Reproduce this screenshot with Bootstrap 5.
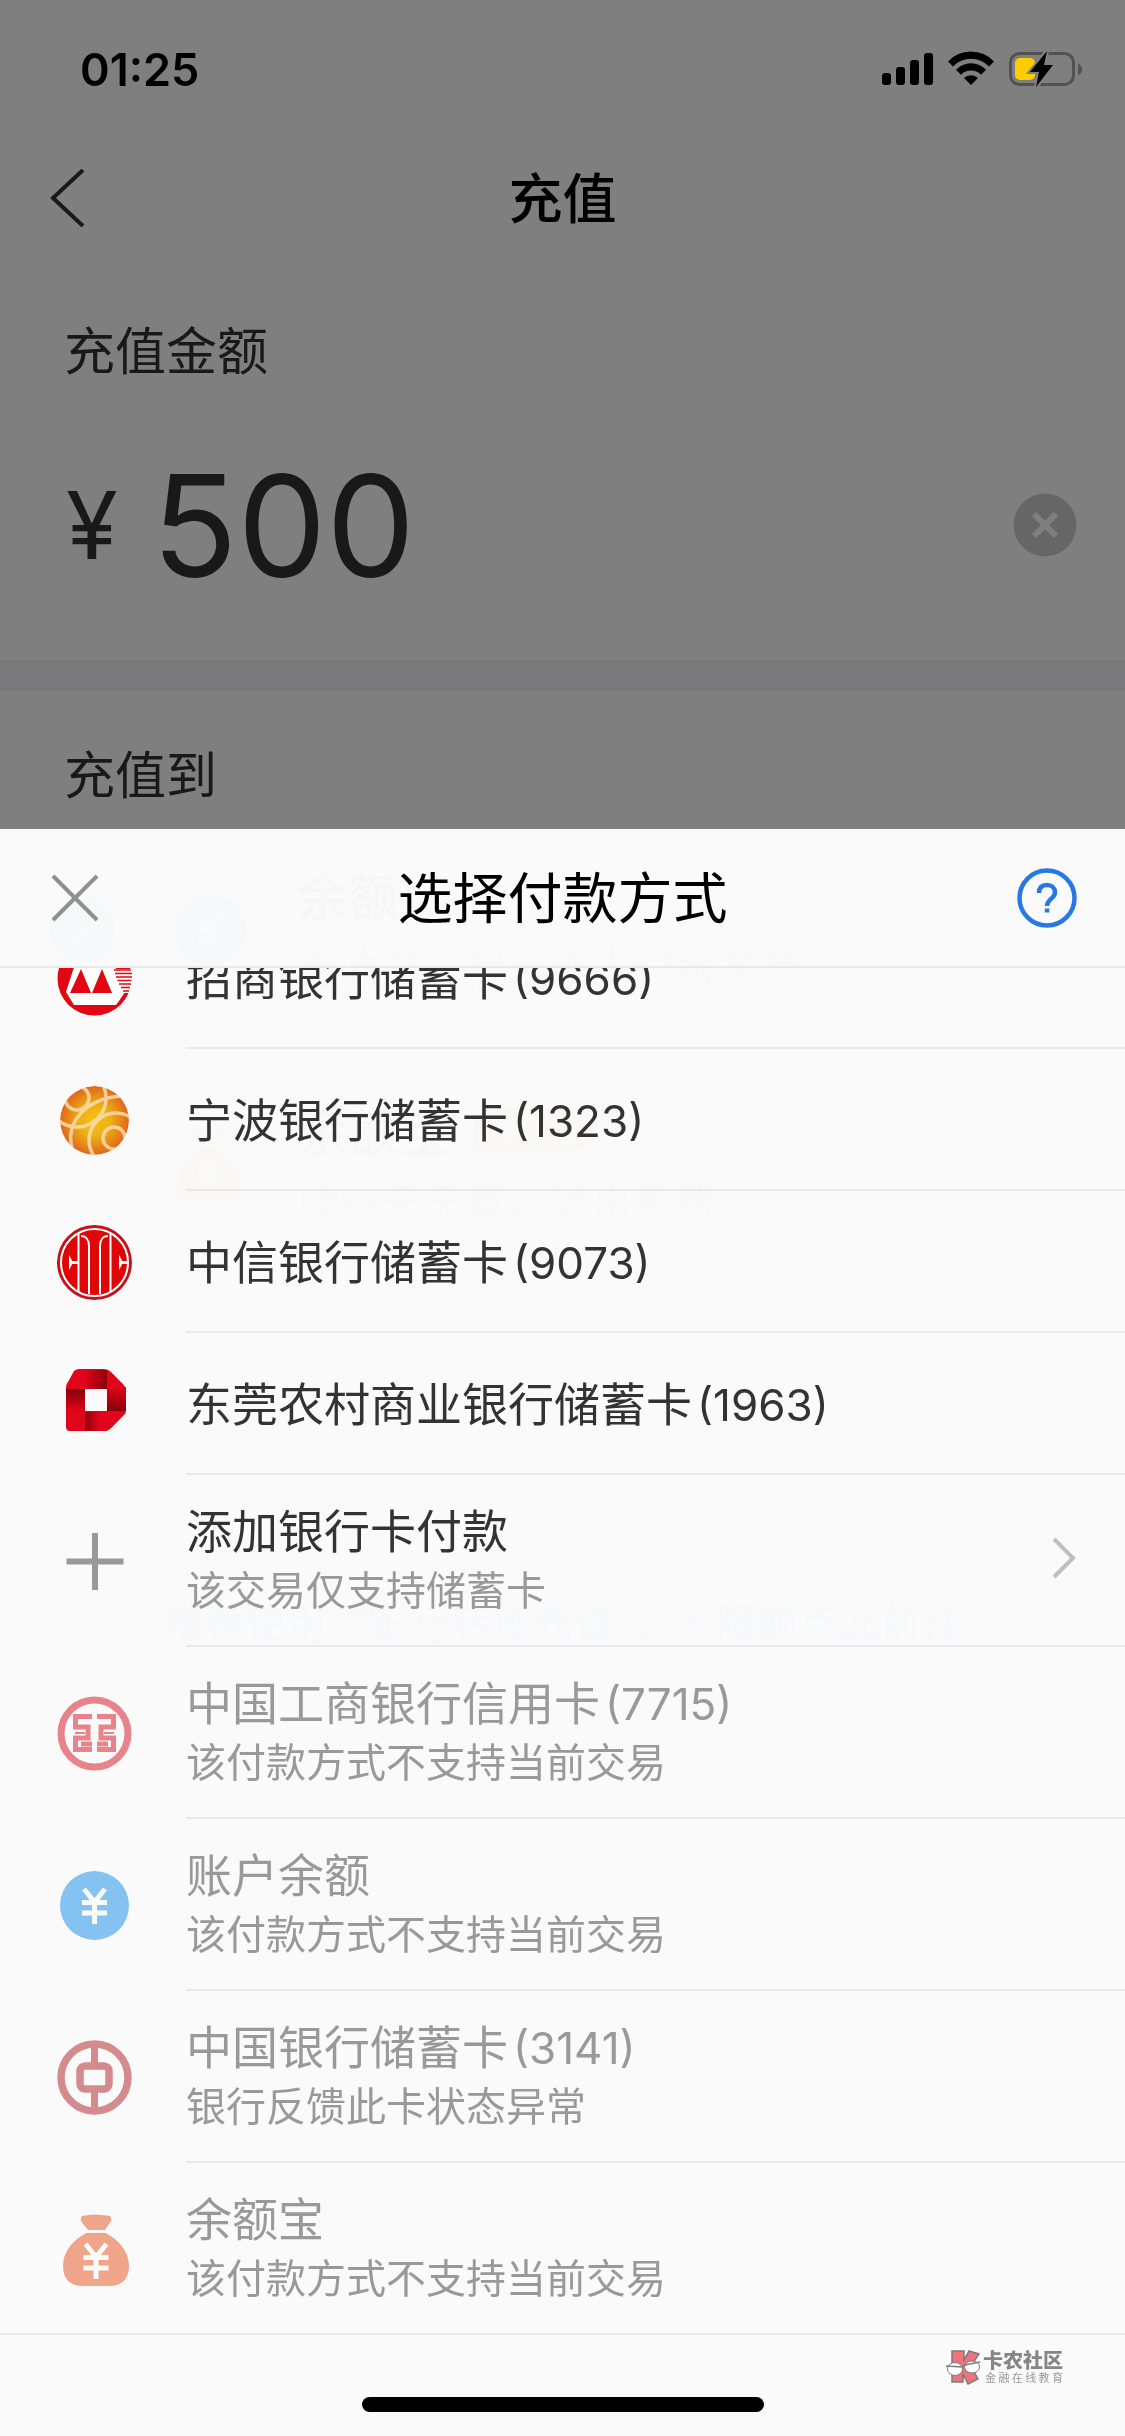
<!DOCTYPE html>
<html lang="zh-CN">
<head>
<meta charset="utf-8">
<meta name="viewport" content="width=device-width, initial-scale=1">
<title>充值</title>
<link href="https://cdn.jsdelivr.net/npm/bootstrap@5.3.0/dist/css/bootstrap.min.css" rel="stylesheet">
<style>
  :root { --latin: Inter, "Noto Sans CJK SC", sans-serif; --han: "Noto Sans CJK SC", sans-serif; }
  body { font-family: var(--han); color: #333; background: #fff; overflow: hidden; }
  svg { display: block; flex: none; }
  .plain { background: none; border: 0; padding: 0; color: inherit; }

  /* recharge page */
  .statusbar { height: 138px; padding: 0 42px 0 80px; font: 600 45px/1 var(--latin); color: #000; z-index: 1051; }
  .topbar { height: 120px; padding: 0 50px; }
  .topbar h1 { font-size: 54px; font-weight: 500; line-height: 80px; color: #000; margin: 0; padding-bottom: 4px; }
  .topbar .side { width: 60px; }
  .section-label { font-size: 51px; line-height: 80px; padding: 0 64px; margin: 0; font-weight: 400; }
  .section-label.first { margin-top: 50px; }
  .section-label.second { margin-top: 42px; }
  .amount-row { height: 206px; padding: 0 48px 0 66px; gap: 34px; margin: 34px 0 32px; }
  .amount-row label { font: 400 94px/1 var(--latin); }
  .amount-row input { font: 400 141px/1 var(--latin); color: inherit; min-width: 0; }
  .amount-row input:focus { outline: none; }
  .band { height: 30px; background: #f4f4f8; border-top: 3px solid #f0f0f2; border-bottom: 3px solid #f0f0f2; }
  .target { height: 235px; padding: 0 49px; }
  .target .t-name { font-size: 51px; line-height: 72px; }
  .target .t-note { font-size: 42px; line-height: 72px; color: #999; }
  .t-tag { font-size: 30px; line-height: 42px; background: #ff3b30; border-radius: 21px 21px 21px 0; padding: 0 16px; margin-left: 24px; color: #fff; }
  .next-btn { height: 138px; margin: 88px 50px 0; background: #d2d6dd; color: #fff; font-size: 54px; border-radius: 12px; }
  .tip { font-size: 41px; line-height: 60px; margin-top: 82px; color: #1677ff; text-decoration: none; }
  .dim { background: rgba(0,0,0,.5); }

  /* payment sheet */
  .sheet { top: 829px; background: rgba(254,254,254,.97); z-index: 1050; }
  .sheet-head { flex: none; height: 139px; padding: 0 48px; border-bottom: 2px solid #e9e9eb; }
  .sheet-head h2 { font-size: 55px; line-height: 80px; font-weight: 400; color: #000; margin: 0; padding-bottom: 8px; }
  .paylist { min-height: 0; }
  .pay { flex: none; height: 142px; padding-left: 57px; color: #333; text-decoration: none; }
  .pay.two { height: 172px; }
  .pay svg.logo { width: 75px; height: 75px; }
  .pay .body-cell { margin-left: 54px; border-bottom: 2px solid #e9e9eb; padding: 0 48px 4px 0; }
  .pay:last-child { border-bottom: 2px solid #e9e9eb; }
  .pay:last-child .body-cell { border-bottom: 0; }
  .pay .p-name { font-size: 46px; line-height: 60px; }
  .pay .p-name span { font: 400 44px/1 var(--latin); margin-left: 5px; }
  .pay .p-note { font-size: 40px; line-height: 60px; color: #999; }
  .pay.off { color: #999; }
  .pay.off svg { opacity: .5; }
  .sheet-foot { flex: none; height: 101px; }
  .sheet-foot .homebar { height: 15px; width: 402px; border-radius: 8px; background: #000; margin-bottom: 24px; }
  .brand { right: 62px; bottom: 51px; color: #868686; gap: 2px; }
  .brand .b-name { font-size: 20px; line-height: 20px; font-weight: 900; }
  .brand .b-sub { font-size: 11px; line-height: 14px; text-align-last: justify; padding-left: 2px; color: #999; }
</style>
<script src="https://cdn.jsdelivr.net/npm/bootstrap@5.3.0/dist/js/bootstrap.bundle.min.js"></script>
</head>
<body>
<main class="d-flex flex-column min-vh-100">
  <div class="statusbar position-relative d-flex align-items-center justify-content-between">
    <span>01:25</span>
    <svg width="202" height="36" viewBox="0 0 202 36" role="img" aria-label="信号、无线网络、电量">
      <rect x="1" y="22" width="9" height="12" rx="3"/><rect x="15" y="16" width="9" height="18" rx="3"/>
      <rect x="29" y="9" width="9" height="25" rx="3"/><rect x="43" y="2" width="9" height="32" rx="3"/>
      <path d="M67 10.500a31.500 31.500 0 0 1 46 0l-5 5a25 25 0 0 0-36 0z"/>
      <path d="M75 18.800a20.500 20.500 0 0 1 30 0l-5 5a14 14 0 0 0-20 0z"/>
      <path d="M83 27a10 10 0 0 1 14 0l-7 7z"/>
      <rect x="129.500" y="2.500" width="63" height="31" rx="9" fill="none" stroke="#525252" stroke-width="3"/>
      <path d="M197 12.500v12q4-2 4-6t-4-6z" fill="#525252"/>
      <rect x="134" y="7" width="20" height="22" rx="5" fill="#fc0"/>
      <path d="M166 0l-3 14h9l-17 22 3-15h-9z" fill="#000" stroke="#808080" stroke-width="4" paint-order="stroke"/>
    </svg>
  </div>
  <header class="topbar d-flex align-items-center justify-content-between">
    <button class="plain side" aria-label="返回"><svg width="36" height="58" viewBox="0 0 36 58" fill="none" stroke="#333" stroke-width="4"><path d="M33 1L3 29l30 28"/></svg></button>
    <h1>充值</h1><span class="side"></span>
  </header>
  <h2 class="section-label first">充值金额</h2>
  <div class="amount-row d-flex align-items-center">
    <label for="amt">¥</label>
    <input id="amt" class="plain flex-grow-1" value="500" inputmode="decimal">
    <button class="plain" aria-label="清除"><svg width="64" height="64" viewBox="0 0 64 64"><circle cx="32" cy="32" r="31.500" fill="#ccc"/><path d="M21 21l22 22M43 21L21 43" stroke="#fff" stroke-width="6"/></svg></button>
  </div>
  <div class="band"></div>
  <h2 class="section-label second">充值到</h2>
  <div class="target d-flex align-items-center">
    <svg width="67" height="67" viewBox="0 0 67 67"><circle cx="33.500" cy="33.500" r="33" fill="#1677ff"/><path d="M19 34l11 11 19-22" fill="none" stroke="#fff" stroke-width="5"/></svg>
    <svg class="ms-5 me-5" width="85" height="74" viewBox="0 0 85 74"><circle cx="46" cy="37" r="36" fill="#108ee9"/><path d="M34 19l12 16 12-16M34 37h24M34 47h24M46 35v22" fill="none" stroke="#fff" stroke-width="5"/></svg>
    <div><div class="t-name">余额</div><div class="t-note">无收益，提现需支付服务费</div></div>
  </div>
  <div class="target d-flex align-items-center">
    <svg width="67" height="67" viewBox="0 0 67 67"><circle cx="33.500" cy="33.500" r="32" fill="none" stroke="#ccc" stroke-width="2"/></svg>
    <svg class="ms-5 me-5" width="85" height="74" viewBox="0 0 85 74"><path d="M31 3q12-4 26 0 3 6-5 13H36q-8-7-5-13zM36 20h17c14 10 24 26 24 38 0 11-8 15-19 15H31c-11 0-19-4-19-15 0-12 10-28 24-38z" fill="#f4511e"/><path d="M34 29l11 14 11-14M34 45h22M34 55h22M45 43v22" fill="none" stroke="#fff" stroke-width="5"/></svg>
    <div><div class="t-name d-flex align-items-center">余额宝<span class="t-tag">赚收益</span></div><div class="t-note">收益天天算，转出免费</div></div>
  </div>
  <button class="next-btn plain">下一步</button>
  <a class="tip text-center" href="#">推荐使用“银行转账充值”，不限额点此前往</a>
</main>
<div class="dim position-fixed top-0 start-0 w-100 h-100"></div>

<section class="sheet position-fixed start-0 end-0 bottom-0 d-flex flex-column" role="dialog" aria-labelledby="sheetTitle">
  <div class="sheet-head d-flex align-items-center justify-content-between">
    <button class="plain" aria-label="关闭"><svg width="60" height="54" viewBox="0 0 60 54" stroke="#909092" stroke-width="4"><path d="M5 5l44 44M49 5L5 49"/></svg></button>
    <h2 id="sheetTitle">选择付款方式</h2>
    <button class="plain" aria-label="帮助"><svg width="60" height="60" viewBox="0 0 60 60" fill="none" stroke="#2878e4" stroke-width="4.500"><circle cx="30" cy="30" r="27.500"/><path d="M22 25c0-5.500 3-8 8-8s8 3 8 7.500c0 6-8 6.500-8 13.500"/><path d="M27.800 40.500h4.500v4h-4.500z" fill="#2878e4" stroke="none"/></svg></button>
  </div>

  <div class="paylist flex-grow-1 overflow-hidden d-flex flex-column justify-content-end">
    <a href="#" class="pay d-flex align-items-center">
      <svg class="logo" viewBox="0 0 75 75"><circle cx="37.500" cy="37.500" r="37" fill="#e20613"/><path d="M19 20h37l12 31-6 9-3 4H17L9 51z" fill="#fff"/><path d="M24 28L13 52h21zM45 28L35 52h20z" fill="#e20613"/><path d="M58 28h17v24h-9z" fill="#fff"/><path d="M57 29h17M58 32.500h17M59 36h16M60.500 39.500h14M62 43h12M64 46.500h9M66 50h6" stroke="#e20613" stroke-width="1.600"/></svg>
      <div class="body-cell flex-grow-1 h-100 d-flex flex-column justify-content-center"><div class="p-name">招商银行储蓄卡<span>(9666)</span></div></div>
    </a>
    <a href="#" class="pay d-flex align-items-center">
      <svg class="logo" viewBox="0 0 75 75"><defs><radialGradient id="nb"><stop offset="0" stop-color="#f3c313"/><stop offset=".45" stop-color="#eeb015"/><stop offset="1" stop-color="#e0681c"/></radialGradient><clipPath id="nbc"><circle cx="37.500" cy="37.500" r="34.500"/></clipPath></defs><g clip-path="url(#nbc)"><circle cx="37.500" cy="37.500" r="34.500" fill="url(#nb)"/><g fill="none" stroke="#fbdcae" stroke-width="3.500" opacity=".85"><circle cx="20" cy="15" r="12"/><circle cx="20" cy="15" r="29"/><circle cx="57" cy="55" r="11"/><circle cx="59" cy="57" r="27"/><path d="M16 68C6 42 28 12 72 13"/></g></g></svg>
      <div class="body-cell flex-grow-1 h-100 d-flex flex-column justify-content-center"><div class="p-name">宁波银行储蓄卡<span>(1323)</span></div></div>
    </a>
    <a href="#" class="pay d-flex align-items-center">
      <svg class="logo" viewBox="0 0 75 75"><circle cx="37.500" cy="37.500" r="37.500" fill="#c41218"/><circle cx="37.500" cy="37.500" r="33.500" fill="#e10606" stroke="#fff" stroke-width="2"/><path d="M21.500 9v57M53.500 9v57M24 11c5 0 8 4 8 10v48M51 11c-5 0-8 4-8 10v48" fill="none" stroke="#fff" stroke-width="2"/><path d="M12 30q3 5 3 6h6v3h-6q0 1-3 6zM62 30q3 5 3 6h6v3h-6q0 1-3 6z" fill="#fff"/></svg>
      <div class="body-cell flex-grow-1 h-100 d-flex flex-column justify-content-center"><div class="p-name">中信银行储蓄卡<span>(9073)</span></div></div>
    </a>
    <a href="#" class="pay d-flex align-items-center">
      <svg class="logo" viewBox="0 0 75 75"><defs><linearGradient id="d1"><stop offset=".35" stop-color="#e1051b"/><stop offset="1" stop-color="#8e0009"/></linearGradient><linearGradient id="d2" x1="0" y1="0" x2="0" y2="1"><stop offset="0" stop-color="#e1051b"/><stop offset="1" stop-color="#850007"/></linearGradient></defs><path d="M22 2h25q4 0 7 3l12 12q3 3 3 7v19q0 3-2 5L54 61q-3 3-6 3H13q-4 0-4-4V20q0-3 2-5L17 4q2-2 5-2z" fill="#e1051b"/><path d="M24 3h26v19H15z" fill="url(#d1)"/><path d="M50 20h19v24H50z" fill="url(#d2)"/><path d="M9 22h19v22H9z" fill="url(#d2)" transform="rotate(180 18.500 33)"/><path d="M28 45h22v19H28z" fill="url(#d1)" transform="matrix(-1 0 0 1 78 0)"/><path d="M49 45h20L54 61q-3 3-6 3H45z" fill="#e1051b"/><path d="M28 22h22v22H28z" fill="#fafafa"/></svg>
      <div class="body-cell flex-grow-1 h-100 d-flex flex-column justify-content-center"><div class="p-name">东莞农村商业银行储蓄卡<span>(1963)</span></div></div>
    </a>
    <a href="#" class="pay two d-flex align-items-center">
      <svg class="logo" viewBox="0 0 75 75" stroke="#999" stroke-width="6"><path d="M38 9v57M9.500 37.500h57"/></svg>
      <div class="body-cell flex-grow-1 h-100 d-flex align-items-center justify-content-between"><div><div class="p-name">添加银行卡付款</div><div class="p-note">该交易仅支持储蓄卡</div></div>
      <svg width="26" height="42" viewBox="0 0 26 42" fill="none" stroke="#bfbfbf" stroke-width="4"><path d="M3 2l19 19L3 40"/></svg></div>
    </a>
    <div class="pay two off d-flex align-items-center">
      <svg class="logo" viewBox="0 0 75 75" fill="none" stroke="#d90f1f"><circle cx="37.500" cy="37.500" r="33.500" stroke-width="7"/><path d="M35 20.500H18.500V31H31v11H18.500v11.500H35M24 48h11M40 20.500h16.500V31H44v11h12.500v11.500H40M51 48H40" stroke-width="5"/><path d="M18 37h10M47 37h10" stroke-width="2"/></svg>
      <div class="body-cell flex-grow-1 h-100 d-flex flex-column justify-content-center"><div class="p-name">中国工商银行信用卡<span>(7715)</span></div><div class="p-note">该付款方式不支持当前交易</div></div>
    </div>
    <div class="pay two off d-flex align-items-center">
      <svg class="logo" viewBox="0 0 75 75"><circle cx="37.500" cy="37.500" r="34.500" fill="#108ee9"/><path d="M27 21l10.500 13L48 21M25 34.500h25M25 45h25M37.500 33v23" fill="none" stroke="#fff" stroke-width="5"/></svg>
      <div class="body-cell flex-grow-1 h-100 d-flex flex-column justify-content-center"><div class="p-name">账户余额</div><div class="p-note">该付款方式不支持当前交易</div></div>
    </div>
    <div class="pay two off d-flex align-items-center">
      <svg class="logo" viewBox="0 0 75 75" fill="none" stroke="#b01e25"><circle cx="37.500" cy="37.500" r="33.500" stroke-width="7.500"/><rect x="23" y="26" width="29" height="23" rx="5" stroke-width="7.500"/><path d="M37.500 6v17M37.500 52v17" stroke-width="7"/></svg>
      <div class="body-cell flex-grow-1 h-100 d-flex flex-column justify-content-center"><div class="p-name">中国银行储蓄卡<span>(3141)</span></div><div class="p-note">银行反馈此卡状态异常</div></div>
    </div>
    <div class="pay two off d-flex align-items-center">
      <svg class="logo" viewBox="0 0 75 75"><path d="M25 5q13-3 28 0 3 4-1 8l-4 6H31l-5-6q-4-5-1-8zM29 22h20c14 8 23 19 23 33 0 13-7 20-20 20H26C13 75 6 68 6 55c0-14 9-25 23-33z" fill="#e7531c"/><path d="M28.500 33L39 46l10.500-13M26.500 46.500h25M26.500 57h25M39 45v23" fill="none" stroke="#fff" stroke-width="5"/></svg>
      <div class="body-cell flex-grow-1 h-100 d-flex flex-column justify-content-center"><div class="p-name">余额宝</div><div class="p-note">该付款方式不支持当前交易</div></div>
    </div>
  </div>

  <div class="sheet-foot position-relative d-flex align-items-end justify-content-center">
    <div class="homebar"></div>
    <div class="brand position-absolute d-flex align-items-center">
      <svg width="35" height="36" viewBox="0 0 35 36"><path d="M6 2h12v9l5-9 10 3-8 12 7 13-10 5-5-10v8H6z" fill="#ef7378" stroke="#7c7c7c" stroke-width="1.500"/><g fill="#fff" stroke="#7c7c7c"><ellipse cx="9" cy="20" rx="7.500" ry="6.500"/><ellipse cx="26" cy="18" rx="7.500" ry="6"/></g><path d="M0 17l16 1 3-2 15-3" fill="none" stroke="#7c7c7c" stroke-width="1.500"/></svg>
      <div><div class="b-name">卡农社区</div><div class="b-sub">金融在线教育</div></div>
    </div>
  </div>
</section>
</body>
</html>
